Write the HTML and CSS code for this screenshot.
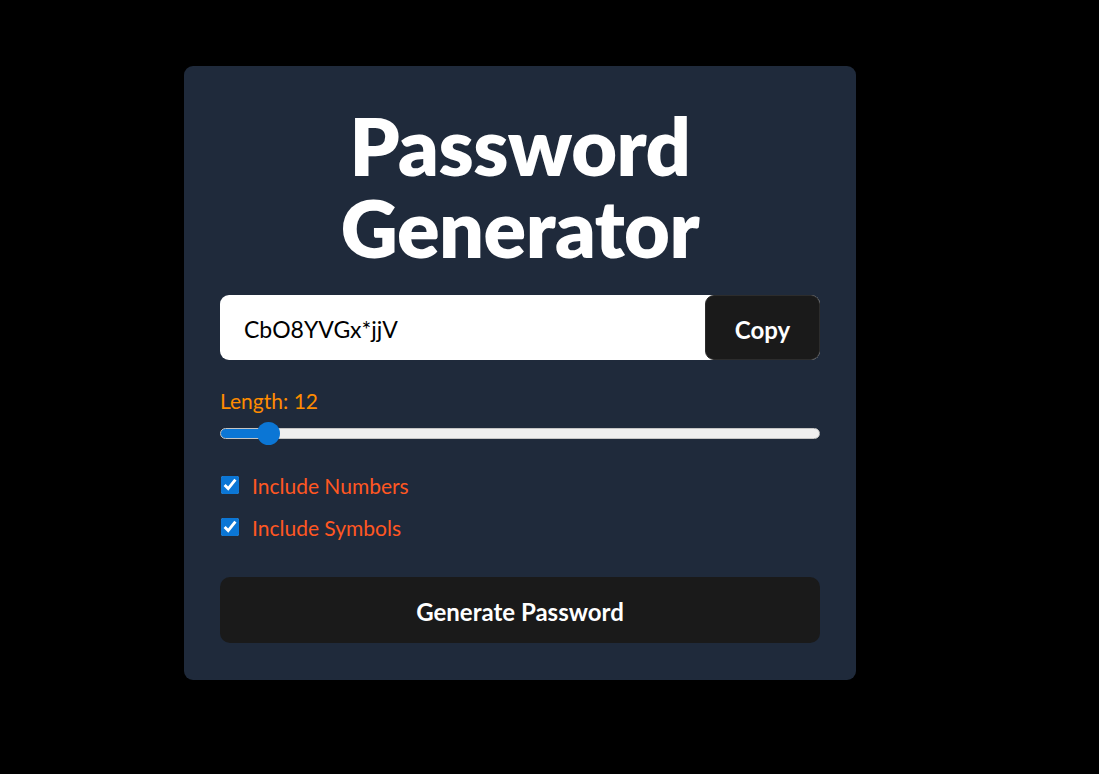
FILE: index.html
```html
<!DOCTYPE html>
<html>
<head>
    <title>Password Generator</title>
    <link rel="stylesheet" href="styles.css">
</head>
<body>
    <div class="card">
        <h1>Password Generator</h1>

        <div class="output">
            <input type="text" id="password" value="CbO8YVGx*jjV" readonly>
            <button class="copy">Copy</button>
        </div>

        <label class="length" for="length">Length: <span id="lenVal">12</span></label>
        <input type="range" id="length" min="8" max="72" value="12" style="--fill: 6.25%">

        <label class="option"><input type="checkbox" checked> Include Numbers</label>
        <label class="option"><input type="checkbox" checked> Include Symbols</label>

        <button class="generate">Generate Password</button>
    </div>
</body>
</html>
```

FILE: styles.css
```css
body { margin: 0; padding: 66px 0 0 184px; background: #000; font-family: Lato, "Noto Sans", sans-serif; }
.card { width: 600px; padding: 39px 36px 37px; background: #1f2a3b; border-radius: 9px; display: flex; flex-direction: column; }
h1 { margin: 0 0 26px; color: #fff; font-size: 79px; line-height: 82px; font-weight: 800; text-align: center; letter-spacing: -0.5px; }
.output { display: flex; height: 65px; background: #fff; border-radius: 9px; }
.output input { flex: 1; min-width: 0; border: none; background: transparent; padding: 2px 0 0 24px; font: 23px Lato, sans-serif; color: #000; outline: none; }
.copy { width: 115px; padding-top: 4px; background: #1a1a1a; color: #fff; border: 1px solid #2c2c2c; border-radius: 9px; font: 700 24px Lato, sans-serif; cursor: pointer; }
.length { margin-top: 29px; color: #ff8c00; font-size: 21px; line-height: 24px; }
input[type=range] { -webkit-appearance: none; appearance: none; margin: 9px 0 0; width: 600px; height: 23px; background: transparent; }
input[type=range]::-webkit-slider-runnable-track { height: 11px; border-radius: 6px; border: 1px solid #c4c4c4; background: linear-gradient(to right, #0b76d5 var(--fill), #efefef var(--fill)); box-sizing: border-box; }
input[type=range]::-webkit-slider-thumb { -webkit-appearance: none; width: 23px; height: 23px; margin-top: -7px; border-radius: 50%; background: #0b76d5; border: none; }
.option { display: flex; align-items: center; gap: 13px; height: 24px; color: #ff5722; font-size: 21px; margin-top: 28px; }
.option + .option { margin-top: 18px; }
.option input { margin: 0 0 0 1px; width: 18px; height: 18px; accent-color: #0b76d5; }
.generate { margin-top: 38px; height: 66px; padding-top: 4px; background: #1a1a1a; color: #fff; border: none; border-radius: 10px; font: 700 24px Lato, sans-serif; cursor: pointer; }
```
